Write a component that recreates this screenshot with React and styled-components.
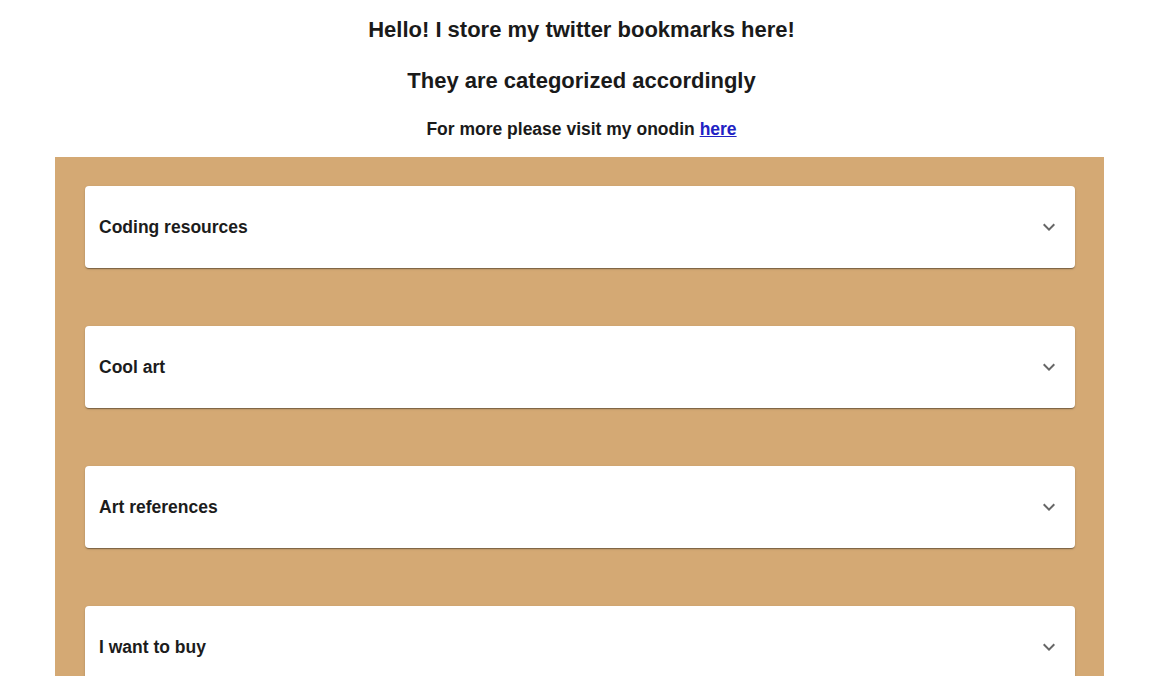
import React from "react";
import styled, { createGlobalStyle } from "styled-components";

const GlobalStyle = createGlobalStyle`
  body {
    margin: 0;
    background: #ffffff;
    font-family: "Liberation Sans", Arial, Helvetica, sans-serif;
    color: #1a1a1a;
  }
`;

// header texts
const Header = styled.header`
  display: flex;
  flex-direction: column;
  align-items: center;
  padding-top: 16px;
`;
const Title = styled.h2`
  margin: 0;
  font-size: 22px;
  line-height: 28px;
  font-weight: 700;
  margin-bottom: ${(p) => p.gap || 0}px;
`;
const Sub = styled.p`
  margin: 0;
  margin-top: 23px;
  font-size: 17.5px;
  line-height: 22px;
  font-weight: 700;
`;
const HereLink = styled.a`
  color: #2222c4;
  text-decoration: underline;
`;

// bookmark panel
const Panel = styled.main`
  margin: 17px 59px 0 55px;
  background: #d4a974;
  padding: 29px 29px 40px 30px;
  display: flex;
  flex-direction: column;
  gap: 58px;
`;
const Card = styled.div`
  background: #fff;
  border-radius: 4px;
  height: 82px;
  display: flex;
  align-items: center;
  justify-content: space-between;
  padding: 0 14px;
  box-shadow: 0px 2px 1px -1px rgba(0, 0, 0, 0.25),
    0px 1px 1px 0px rgba(0, 0, 0, 0.16), 0px 1px 3px 0px rgba(0, 0, 0, 0.12);
  box-sizing: border-box;
`;
const CardTitle = styled.span`
  font-size: 17.5px;
  font-weight: 700;
  color: #1c1c1c;
`;
const Chevron = styled.svg`
  width: 24px;
  height: 24px;
  fill: rgba(0, 0, 0, 0.6);
`;

const categories = [
  "Coding resources",
  "Cool art",
  "Art references",
  "I want to buy",
];

export default function App() {
  return (
    <>
      <GlobalStyle />
      <Header>
        <Title gap={23}>Hello! I store my twitter bookmarks here!</Title>
        <Title>They are categorized accordingly</Title>
        <Sub>
          For more please visit my onodin <HereLink href="#">here</HereLink>
        </Sub>
      </Header>
      <Panel>
        {categories.map((c) => (
          <Card key={c}>
            <CardTitle>{c}</CardTitle>
            <Chevron viewBox="0 0 24 24">
              <path d="M16.59 8.59 12 13.17 7.41 8.59 6 10l6 6 6-6z" />
            </Chevron>
          </Card>
        ))}
      </Panel>
    </>
  );
}
